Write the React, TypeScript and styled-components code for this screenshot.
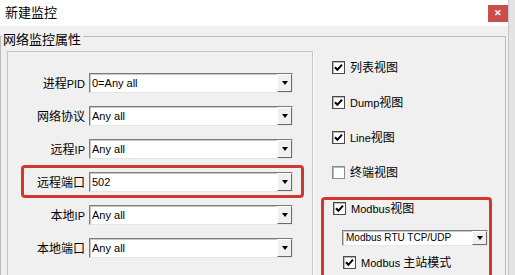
import styled, { createGlobalStyle, css } from "styled-components";

const GlobalStyle = createGlobalStyle`
  html, body {
    margin: 0;
    padding: 0;
  }
  body {
    width: 515px;
    height: 275px;
    overflow: hidden;
    background: #f0f0f0;
    font-family: "Liberation Sans", "Noto Sans CJK SC", sans-serif;
    color: #000;
  }
`;

const Screen = styled.div`
  display: flex;
  width: 515px;
  height: 275px;
  overflow: hidden;
`;

const Window = styled.div`
  width: 508px;
  display: flex;
  flex-direction: column;
  background: #f0f0f0;
`;

const Edge = styled.div`
  flex: 1;
  background: #e4e4e4;
  border-left: 1px solid #c6c6c6;
`;

const TitleBar = styled.div`
  height: 26px;
  flex-shrink: 0;
  background: #fff;
  display: flex;
  align-items: flex-start;
  justify-content: space-between;
`;

const Title = styled.span`
  margin: 4px 0 0 5px;
  font-family: "Noto Sans CJK SC", sans-serif;
  font-size: 13px;
  line-height: 16px;
`;

const CloseButton = styled.div`
  margin-top: 5px;
  width: 20px;
  height: 17px;
  background: #c9504a;
  color: #fff;
  display: flex;
  align-items: center;
  justify-content: center;
  font-size: 9px;
  font-weight: bold;
  line-height: 1;
`;

const Body = styled.div`
  flex: 1;
  padding: 10px 2px 0 0;
`;

const Group = styled.div`
  position: relative;
  height: 260px;
  border: 1px solid #bdbdbd;
  border-bottom: none;
  display: flex;
  align-items: flex-start;
  padding: 14px 0 0 6px;
`;

const Legend = styled.span`
  position: absolute;
  top: -6px;
  left: 1px;
  padding: 0 2px 0 1px;
  background: #f0f0f0;
  font-family: "Noto Sans CJK SC", sans-serif;
  font-size: 13px;
  line-height: 16px;
`;

const LeftPanel = styled.div`
  box-sizing: border-box;
  width: 306px;
  height: 240px;
  border: 1px solid #c4c4c4;
  box-shadow: 1px 1px 0 #fff;
  padding: 21px 0 0 0;
  display: flex;
  flex-direction: column;
  gap: 13px;
`;

const FieldRow = styled.div<{ $highlight?: boolean }>`
  position: relative;
  display: grid;
  grid-template-columns: 77px 204px;
  column-gap: 4px;
  align-items: center;
  ${(p) =>
    p.$highlight &&
    css`
      &::after {
        content: "";
        position: absolute;
        top: -7px;
        bottom: -6px;
        left: 13px;
        right: 8px;
        border: 3px solid #d0382f;
        border-radius: 4px;
      }
    `}
`;

const Label = styled.span`
  text-align: right;
  font-size: 12px;
  line-height: 16px;
  font-family: "Noto Sans CJK SC", sans-serif;
`;

const Latin = styled.span`
  font-family: "Liberation Sans", sans-serif;
  font-size: 11px;
`;

const Combo = styled.div<{ $small?: boolean }>`
  box-sizing: border-box;
  height: ${(p) => (p.$small ? 16 : 20)}px;
  display: flex;
  background: #fff;
  border-top: 1px solid #7c7c7c;
  border-left: 1px solid #7c7c7c;
  border-right: 1px solid #e6e6e6;
  border-bottom: 1px solid #e6e6e6;
  box-shadow: inset 1px 1px 0 #c8c8c8;
`;

const ComboText = styled.span<{ $small?: boolean }>`
  flex: 1;
  padding-left: ${(p) => (p.$small ? 3 : 2)}px;
  font-family: "Liberation Sans", sans-serif;
  font-size: ${(p) => (p.$small ? 10 : 11)}px;
  line-height: ${(p) => (p.$small ? 14 : 18)}px;
  white-space: nowrap;
`;

const DropButton = styled.span`
  box-sizing: border-box;
  width: 15px;
  background: #f0f0f0;
  border-top: 1px solid #fff;
  border-left: 1px solid #fff;
  border-right: 1px solid #6a6a6a;
  border-bottom: 1px solid #6a6a6a;
  display: flex;
  align-items: center;
  justify-content: center;
`;

const Arrow = styled.span`
  width: 0;
  height: 0;
  border-left: 3.5px solid transparent;
  border-right: 3.5px solid transparent;
  border-top: 4px solid #000;
`;

const RightCol = styled.div`
  display: flex;
  flex-direction: column;
  padding: 9px 0 0 8px;
`;

const CheckList = styled.div`
  display: flex;
  flex-direction: column;
  gap: 21px;
  padding-left: 11px;
`;

const CheckRow = styled.div<{ $indent?: number; $top?: number }>`
  display: flex;
  align-items: center;
  gap: 5px;
  height: 14px;
  margin-left: ${(p) => p.$indent ?? 0}px;
  margin-top: ${(p) => p.$top ?? 0}px;
  font-family: "Noto Sans CJK SC", sans-serif;
  font-size: 12px;
  line-height: 14px;
  white-space: nowrap;
`;

const Box = styled.span<{ $checked?: boolean }>`
  box-sizing: border-box;
  width: 13px;
  height: 13px;
  background: #fff;
  border: 1px solid ${(p) => (p.$checked ? "#4a4a4a" : "#8c8c8c")};
  box-shadow: inset 1px 1px 0 #b8b8b8;
  display: flex;
  align-items: center;
  justify-content: center;
  flex-shrink: 0;
`;

const ModbusBox = styled.div`
  box-sizing: border-box;
  width: 171px;
  height: 110px;
  margin-top: 18px;
  border: 3px solid #d0382f;
  border-radius: 4px;
  padding: 1px 1px 0 9px;
  display: flex;
  flex-direction: column;
`;

const ModbusCombo = styled(Combo)`
  margin: 15px 0 0 9px;
`;

function Check({ checked }: { checked?: boolean }) {
  return (
    <Box $checked={checked}>
      {checked && (
        <svg width="9" height="9" viewBox="0 0 9 9">
          <polyline
            points="1,4.2 3.4,6.8 8,1.6"
            fill="none"
            stroke="#000"
            strokeWidth="2"
          />
        </svg>
      )}
    </Box>
  );
}

function ComboBox({ value, small }: { value: string; small?: boolean }) {
  return (
    <>
      <ComboText $small={small}>{value}</ComboText>
      <DropButton>
        <Arrow />
      </DropButton>
    </>
  );
}

const fields = [
  { label: "进程", latin: "PID", value: "0=Any all" },
  { label: "网络协议", latin: "", value: "Any all" },
  { label: "远程", latin: "IP", value: "Any all" },
  { label: "远程端口", latin: "", value: "502", highlight: true },
  { label: "本地", latin: "IP", value: "Any all" },
  { label: "本地端口", latin: "", value: "Any all" },
];

export default function App() {
  return (
    <>
      <GlobalStyle />
      <Screen>
        <Window>
          <TitleBar>
            <Title>新建监控</Title>
            <CloseButton>✕</CloseButton>
          </TitleBar>
          <Body>
            <Group>
              <Legend>网络监控属性</Legend>
              <LeftPanel>
                {fields.map((f) => (
                  <FieldRow key={f.label + f.latin} $highlight={f.highlight}>
                    <Label>
                      {f.label}
                      {f.latin && <Latin>{f.latin}</Latin>}
                    </Label>
                    <Combo>
                      <ComboBox value={f.value} />
                    </Combo>
                  </FieldRow>
                ))}
              </LeftPanel>
              <RightCol>
                <CheckList>
                  <CheckRow>
                    <Check checked />
                    列表视图
                  </CheckRow>
                  <CheckRow>
                    <Check checked />
                    <span>
                      <Latin>Dump</Latin>视图
                    </span>
                  </CheckRow>
                  <CheckRow>
                    <Check checked />
                    <span>
                      <Latin>Line</Latin>视图
                    </span>
                  </CheckRow>
                  <CheckRow>
                    <Check />
                    终端视图
                  </CheckRow>
                </CheckList>
                <ModbusBox>
                  <CheckRow>
                    <Check checked />
                    <span>
                      <Latin>Modbus</Latin>视图
                    </span>
                  </CheckRow>
                  <ModbusCombo $small>
                    <ComboBox value="Modbus RTU TCP/UDP" small />
                  </ModbusCombo>
                  <CheckRow $indent={10} $top={9}>
                    <Check checked />
                    <span>
                      <Latin>Modbus </Latin>主站模式
                    </span>
                  </CheckRow>
                </ModbusBox>
              </RightCol>
            </Group>
          </Body>
        </Window>
        <Edge />
      </Screen>
    </>
  );
}
